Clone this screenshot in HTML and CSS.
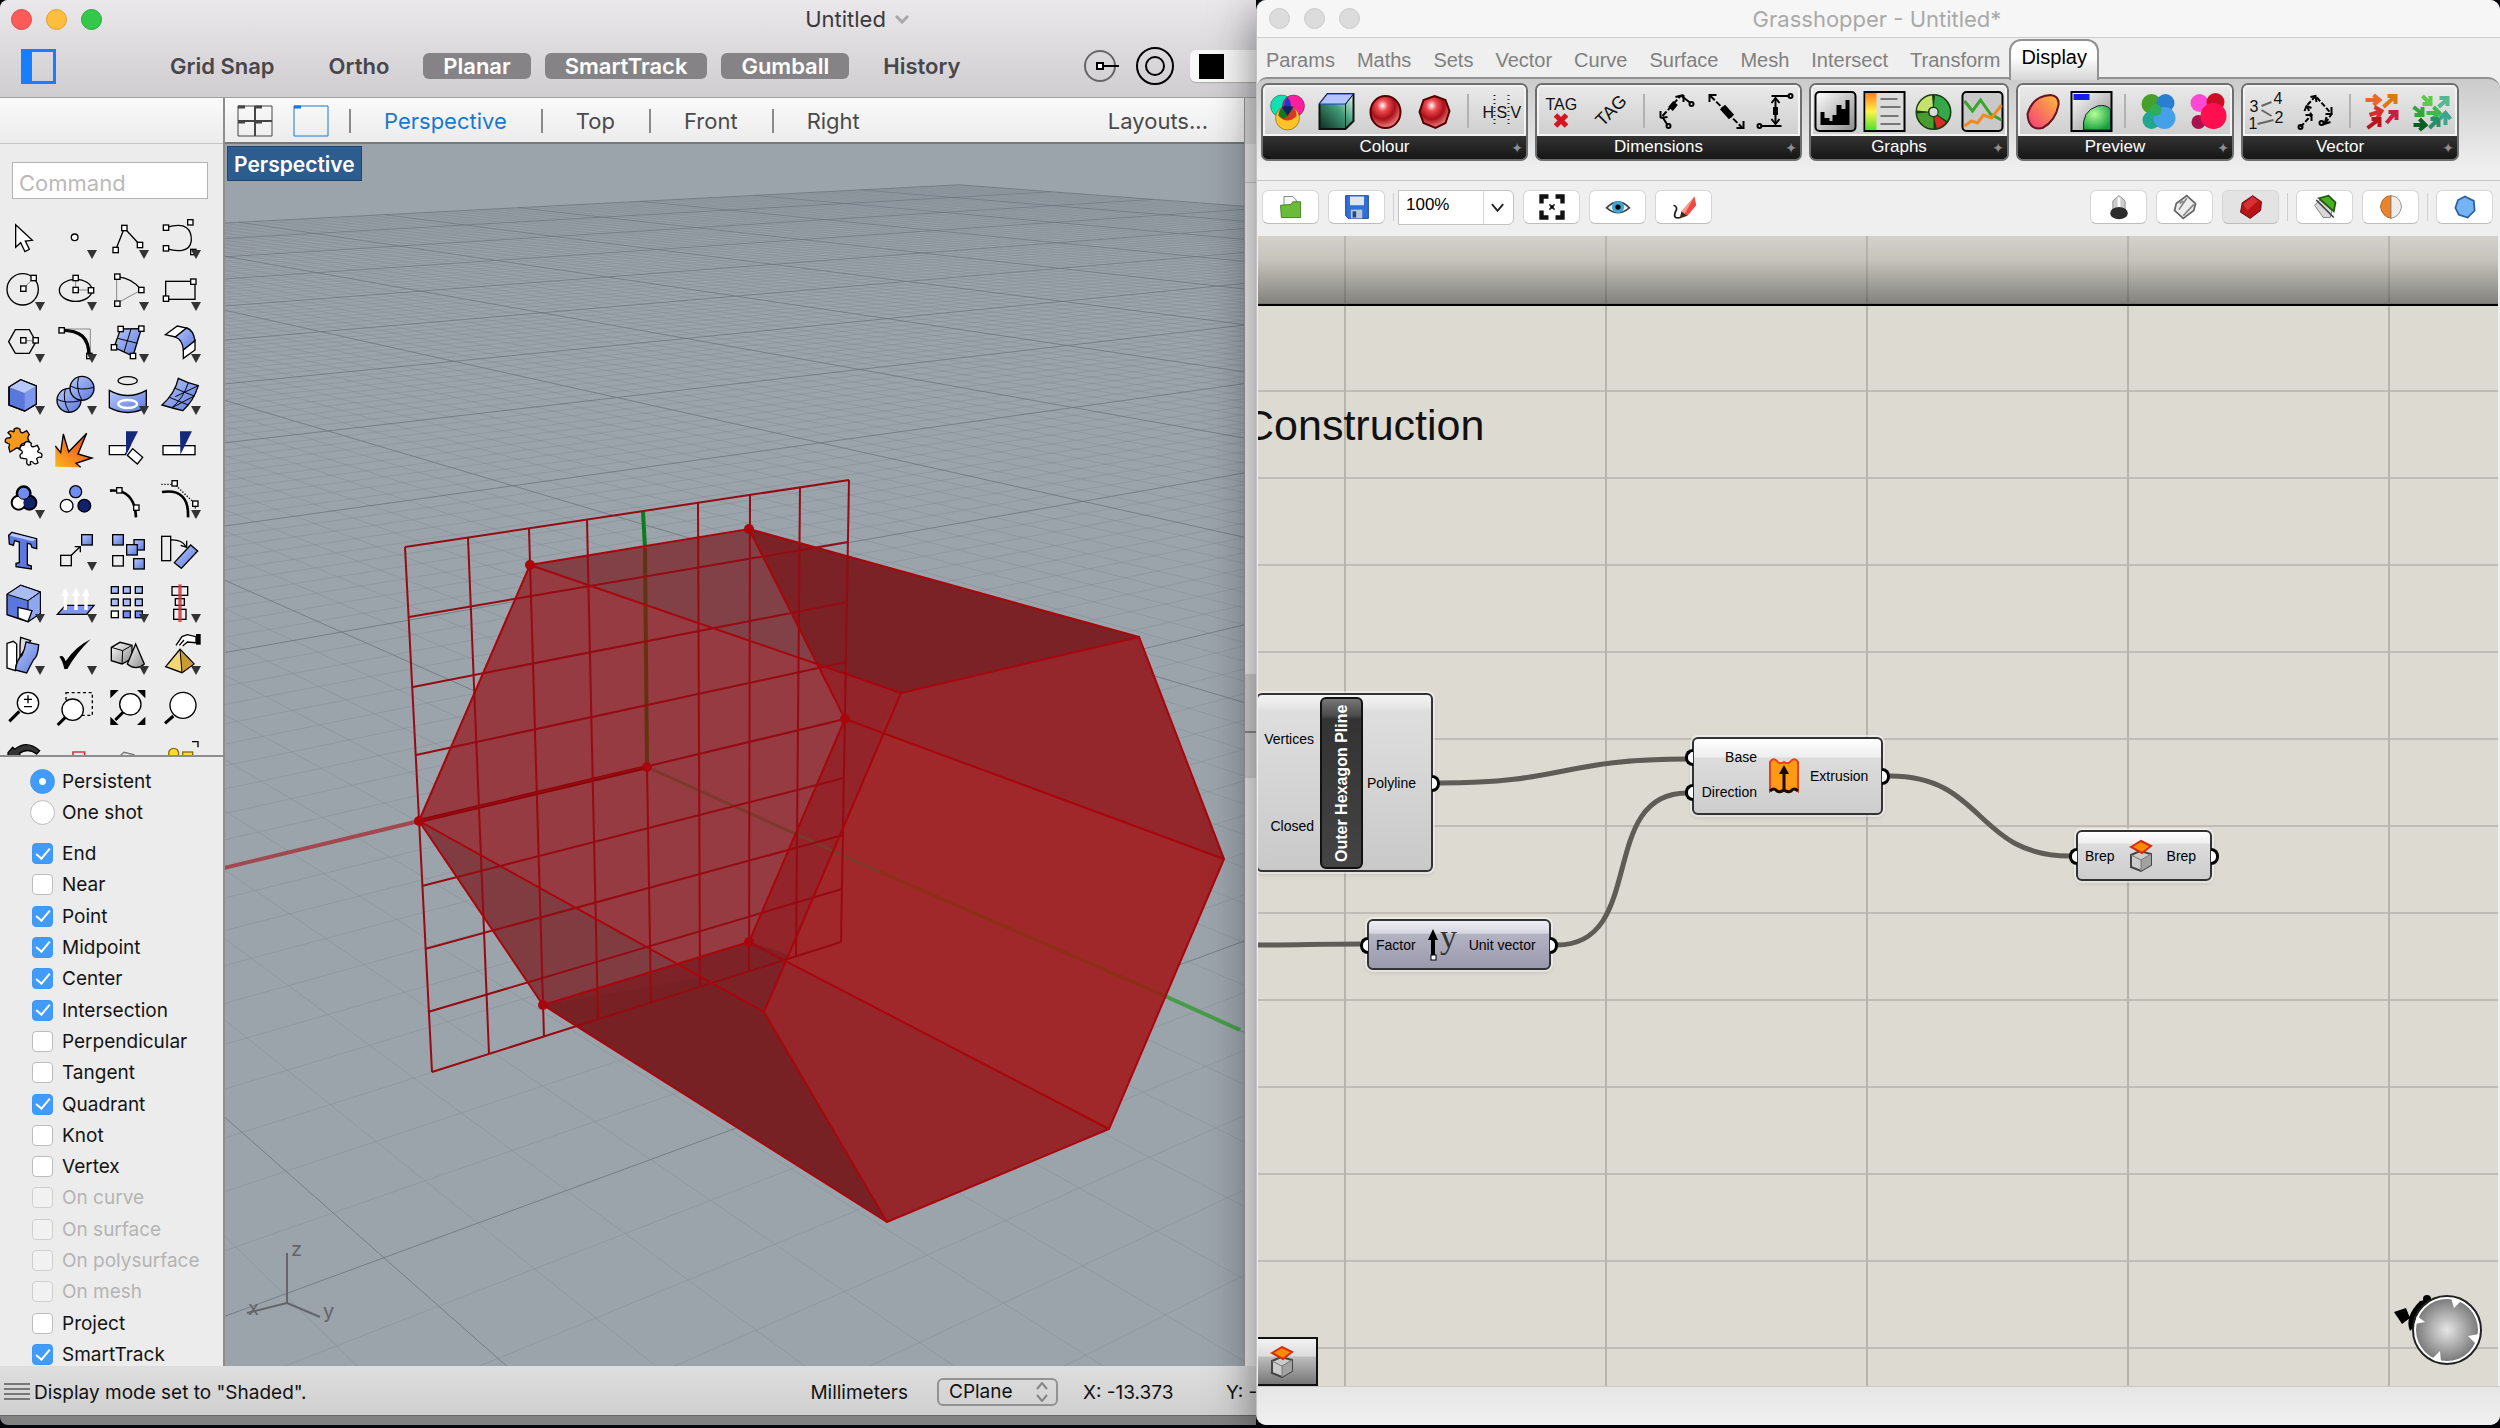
FILE: index.html
```html
<!DOCTYPE html>
<html lang="en">
<head>
    <meta charset="UTF-8">
    <meta name="viewport" content="width=device-width, initial-scale=1.0">
    <title>Untitled</title>
    <link rel="stylesheet" href="styles.css">
</head>
<body>
    <!-- shared gradients and small parts for the icons -->
    <svg class="defs" aria-hidden="true">
        <defs>
            <linearGradient id="blue" x1="0" y1="0" x2="1" y2="1"><stop offset="0" stop-color="#b9c8fa"/><stop offset="1" stop-color="#5a78dc"/></linearGradient>
            <linearGradient id="orange" x1="0" y1="1" x2="1" y2="0"><stop offset="0" stop-color="#ffb41e"/><stop offset="1" stop-color="#e23b22"/></linearGradient>
            <linearGradient id="grey" x1="0" y1="0" x2="1" y2="1"><stop offset="0" stop-color="#fff"/><stop offset="1" stop-color="#8a8a8a"/></linearGradient>
            <linearGradient id="teal" x1="1" y1="0" x2="0" y2="1"><stop offset="0" stop-color="#e8fff4"/><stop offset=".45" stop-color="#3f9a78"/><stop offset="1" stop-color="#0d2a20"/></linearGradient>
            <linearGradient id="heat" x1="0" y1="0" x2="0" y2="1"><stop offset="0" stop-color="#ff7e1e"/><stop offset=".5" stop-color="#fff34a"/><stop offset="1" stop-color="#4fe02e"/></linearGradient>
            <linearGradient id="egg" x1="0" y1="1" x2="1" y2="0"><stop offset="0" stop-color="#f2387a"/><stop offset="1" stop-color="#ffbe3a"/></linearGradient>
            <radialGradient id="ball" cx=".4" cy=".3" r=".7"><stop offset="0" stop-color="#fff"/><stop offset=".25" stop-color="#f04a50"/><stop offset=".6" stop-color="#a80f18"/><stop offset="1" stop-color="#f08080"/></radialGradient>
            <radialGradient id="green" cx=".4" cy=".35" r=".7"><stop offset="0" stop-color="#b6ff9a"/><stop offset="1" stop-color="#12a03c"/></radialGradient>
            <radialGradient id="dial"><stop offset="0" stop-color="#e6e6e6"/><stop offset="1" stop-color="#7c7c7c"/></radialGradient>
            <rect id="pt" x="-8" y="-8" width="16" height="16" fill="#fff" stroke="#000" stroke-width="4"/>
            <g id="brep">
                <path d="M3 15 L12 11 L23 14 V25 L13 31 L3 27 Z" fill="#ccc" stroke="#444" stroke-width="2"/>
                <path d="M13 20 L23 14 V25 L13 31 Z" fill="#a2a2a2"/>
                <path d="M3 15 L13 20 V31 M13 20 L23 14" fill="none" stroke="#777"/>
                <path d="M3 7 L13 1 L23 6 L14 13 Z" fill="#ff8a00" stroke="#d42c10" stroke-width="2"/>
            </g>
        </defs>
    </svg>

    <div class="desktop">
        <!-- Rhino -->
        <div class="window rhino">
            <div class="rhino-header">
                <div class="titlebar">
                    <div class="lights">
                        <button class="light red" aria-label="Close"></button>
                        <button class="light yellow" aria-label="Minimize"></button>
                        <button class="light green" aria-label="Zoom"></button>
                    </div>
                    <div class="doc-title">Untitled
                        <svg width="14" height="9" viewBox="0 0 14 9"><path d="M1 1 L7 7 L13 1" fill="none" stroke="#a9a7aa" stroke-width="3"/></svg>
                    </div>
                </div>
                <div class="toolbar">
                    <button class="side-toggle" aria-label="Toggle sidebar"></button>
                    <div class="modes">
                        <button>Grid Snap</button>
                        <button>Ortho</button>
                        <button class="on">Planar</button>
                        <button class="on">SmartTrack</button>
                        <button class="on">Gumball</button>
                        <button>History</button>
                    </div>
                    <div class="toolbar-right">
                        <button class="icon-btn" aria-label="Filter"><svg width="36" height="36" viewBox="0 0 36 36" fill="none" stroke="#000" stroke-width="2"><circle cx="16" cy="18" r="15" stroke="#666"/><path d="M19 18 H35"/><rect x="13" y="15" width="6" height="6" fill="#fff"/></svg></button>
                        <button class="icon-btn" aria-label="Record"><svg width="40" height="40" viewBox="0 0 40 40" fill="none" stroke="#000" stroke-width="2"><circle cx="20" cy="20" r="18"/><circle cx="20" cy="20" r="9"/></svg></button>
                        <button class="layer-btn" aria-label="Layer colour"><span class="swatch"></span></button>
                    </div>
                </div>
            </div>

            <div class="rhino-main">
                <div class="sidebar">
                    <div class="strip"></div>
                    <input class="command" type="text" placeholder="Command" aria-label="Command">
                    <div class="tools">
                        <button class="tool" aria-label="Select"><svg viewBox="0 183 156 156"><path d="M47 224 V292 L62 278 L75 305 L88 298 L76 273 L97 271 Z"/></svg></button>
                        <button class="tool more" aria-label="Point"><svg viewBox="156 183 156 156"><circle cx="224" cy="262" r="10"/></svg></button>
                        <button class="tool more" aria-label="Polyline"><svg viewBox="312 183 156 156"><path d="M347 300 L373 234 L420 285" fill="none"/><use href="#pt" x="347" y="300"/><use href="#pt" x="373" y="234"/><use href="#pt" x="420" y="285"/></svg></button>
                        <button class="tool more" aria-label="Curve"><svg viewBox="468 183 156 156"><path d="M498 233 C560 213 575 240 574 272 C570 308 530 306 498 295" fill="none"/><use href="#pt" x="498" y="233"/><use href="#pt" x="498" y="295"/><use href="#pt" x="571" y="217"/><use href="#pt" x="580" y="306"/></svg></button>

                        <button class="tool more" aria-label="Circle"><svg viewBox="0 339 156 156"><circle cx="68" cy="418" r="47" fill="none"/><path class="thin" d="M70 416 L101 384"/><use href="#pt" x="70" y="416"/><use href="#pt" x="101" y="384"/></svg></button>
                        <button class="tool more" aria-label="Ellipse"><svg viewBox="156 339 156 156"><ellipse cx="227" cy="421" rx="49" ry="33" fill="none"/><path class="thin" d="M227 384 V420 H273"/><use href="#pt" x="227" y="384"/><use href="#pt" x="227" y="420"/><use href="#pt" x="273" y="421"/></svg></button>
                        <button class="tool more" aria-label="Arc"><svg viewBox="312 339 156 156"><path class="thin" d="M350 380 V460 L424 420"/><path d="M352 380 Q398 385 424 420" fill="none"/><use href="#pt" x="352" y="380"/><use href="#pt" x="424" y="420"/><use href="#pt" x="352" y="461"/></svg></button>
                        <button class="tool more" aria-label="Rectangle"><svg viewBox="468 339 156 156"><rect x="497" y="394" width="88" height="54" fill="none"/><use href="#pt" x="580" y="395"/><use href="#pt" x="498" y="446"/></svg></button>

                        <button class="tool more" aria-label="Polygon"><svg viewBox="0 495 156 156"><path d="M26 575 L46 539 H88 L108 575 L88 610 H46 Z" fill="none"/><path class="thin" d="M70 572 H107"/><use href="#pt" x="70" y="571"/><use href="#pt" x="107" y="571"/></svg></button>
                        <button class="tool more" aria-label="Fillet"><svg viewBox="156 495 156 156"><path class="thin" d="M185 537 H271 V618"/><path d="M185 541 C240 541 267 560 267 618" fill="none" stroke-width="10"/><use href="#pt" x="185" y="541"/><use href="#pt" x="268" y="618"/></svg></button>
                        <button class="tool more" aria-label="Surface"><svg viewBox="312 495 156 156"><path d="M362 537 L424 536 L399 618 L342 592 Z" fill="url(#blue)"/><path d="M393 537 L372 606 M353 565 L412 580" fill="none" stroke-width="3"/><use href="#pt" x="362" y="537"/><use href="#pt" x="424" y="536"/><use href="#pt" x="399" y="618"/><use href="#pt" x="342" y="592"/></svg></button>
                        <button class="tool more" aria-label="Fillet surface"><svg viewBox="468 495 156 156"><path d="M496 554 L532 528 L560 534 L526 561 Z"/><path d="M526 561 L560 534 Q580 540 585 572 L550 600 Q548 570 526 561 Z" fill="url(#blue)"/><path d="M585 572 V600 L550 625 V600 Z"/></svg></button>

                        <button class="tool more" aria-label="Box"><svg viewBox="0 651 156 156"><path d="M27 711 L62 689 L109 708 V762 L74 783 L27 765 Z" fill="#5a78dc"/><path d="M27 711 L74 729 L109 708 L62 689 Z" fill="#b9c8fa" stroke="none"/><path d="M74 729 L109 708 V762 L74 783 Z" fill="#7f97ea" stroke="none"/><path d="M27 711 L62 689 L109 708 V762 L74 783 L27 765 Z" fill="none"/></svg></button>
                        <button class="tool more" aria-label="Boolean"><svg viewBox="156 651 156 156"><circle cx="207" cy="751" r="36" fill="url(#blue)"/><path d="M171 748 Q200 762 240 752 M196 717 Q186 750 208 787" fill="none" stroke-width="3"/><circle cx="246" cy="715" r="36" fill="url(#blue)"/><path d="M211 708 Q240 724 282 712 M236 681 Q226 715 246 751" fill="none" stroke-width="3"/></svg></button>
                        <button class="tool more" aria-label="Project"><svg viewBox="312 651 156 156"><ellipse cx="383" cy="692" rx="29" ry="12" fill="none"/><path d="M328 721 Q383 752 439 721 V773 Q383 802 328 773 Z" fill="url(#blue)"/><ellipse cx="383" cy="762" rx="28" ry="12" fill="none" stroke="#fff" stroke-width="7"/></svg></button>
                        <button class="tool more" aria-label="Mesh"><svg viewBox="468 651 156 156"><path d="M535 685 Q565 700 595 707 Q580 755 548 782 Q520 775 486 765 Q525 730 535 685 Z" fill="url(#blue)"/><path d="M565 698 Q550 745 516 773 M526 715 Q555 728 583 738 M508 742 Q535 753 565 765 M595 707 L526 740 M583 738 L516 773" fill="none" stroke-width="3"/></svg></button>

                        <button class="tool" aria-label="Join"><svg viewBox="0 807 156 156"><path d="M16 876 Q14 862 28 864 Q36 862 30 854 L24 848 Q30 840 38 844 Q44 848 42 838 Q50 830 60 838 Q60 850 70 848 L80 842 L88 854 Q80 864 86 870 Q90 880 80 884 Q68 876 62 886 L60 898 Q50 890 44 898 L30 906 L26 892 Q32 882 24 880 Z" fill="#f59a1e"/><path d="M58 898 L64 886 Q76 888 74 878 Q84 870 94 880 Q90 892 102 890 L112 886 L118 898 Q108 906 118 908 Q130 910 124 922 Q114 920 110 926 L114 938 Q104 946 98 936 Q88 930 92 944 Q80 948 80 936 Q84 924 72 926 L62 924 Q56 914 66 910 Q70 902 58 898 Z"/></svg></button>
                        <button class="tool" aria-label="Explode"><svg viewBox="156 807 156 156"><path d="M166 950 V890 L182 905 L190 850 L206 902 L260 850 L236 912 L276 924 L228 940 L242 952 Z" fill="url(#orange)" stroke="none"/><path d="M166 888 L182 908 L190 852 L206 906 L260 850 L234 912 L276 924 L228 940 L242 952" fill="none"/></svg></button>
                        <button class="tool" aria-label="Trim"><svg viewBox="312 807 156 156"><path d="M328 887 H390 L376 914 H328 Z"/><path d="M398 896 L428 922 L412 942 L382 916 Z"/><path d="M378 844 H414 L378 914 Z" fill="#15297c" stroke="none"/></svg></button>
                        <button class="tool" aria-label="Split"><svg viewBox="468 807 156 156"><rect x="489" y="887" width="96" height="27"/><path d="M540 844 H576 L541 914 Z" fill="#15297c" stroke="none"/></svg></button>

                        <button class="tool more" aria-label="Group"><svg viewBox="0 3 156 156"><g stroke-width="14"><circle cx="71" cy="70" r="17"/><circle cx="56" cy="98" r="17"/><circle cx="88" cy="98" r="17"/></g><g stroke="none"><circle cx="56" cy="98" r="18"/><circle cx="88" cy="98" r="18" fill="#10226b"/></g><circle cx="71" cy="70" r="18" fill="#6f8cf0" stroke-width="3"/></svg></button>
                        <button class="tool" aria-label="Ungroup"><svg viewBox="156 3 156 156"><circle cx="227" cy="65" r="18" fill="#6f8cf0"/><circle cx="200" cy="107" r="19"/><circle cx="253" cy="107" r="19" fill="#10226b"/></svg></button>
                        <button class="tool" aria-label="Edit points"><svg viewBox="312 3 156 156"><path d="M330 62 Q404 56 408 142" fill="none" stroke-width="8"/><use href="#pt" x="358" y="61"/><use href="#pt" x="409" y="113"/></svg></button>
                        <button class="tool more" aria-label="Control points"><svg viewBox="468 3 156 156"><path d="M486 66 Q568 54 564 142" fill="none" stroke-width="8"/><path d="M484 43 H524 L586 102 V142" fill="none" stroke-dasharray="4 5"/><use href="#pt" x="524" y="40"/><use href="#pt" x="586" y="101"/></svg></button>

                        <button class="tool" aria-label="Text"><svg viewBox="0 159 156 156"><path d="M36 187 L110 206 V236 L96 232 L92 222 L82 220 L82 284 L94 288 V297 L48 290 V280 L58 278 V216 L44 212 L40 226 L28 222 L26 196 Z" fill="#5b79e0"/><path d="M36 190 L108 208 L98 214 L30 197 Z" fill="#b9c8fa" stroke="none"/></svg></button>
                        <button class="tool more" aria-label="Move"><svg viewBox="156 159 156 156"><rect x="182" y="256" width="32" height="31" fill="#eee"/><rect x="245" y="194" width="32" height="31" fill="url(#blue)"/><path d="M214 256 L240 230 M224 230 H241 V247" fill="none"/></svg></button>
                        <button class="tool" aria-label="Copy"><svg viewBox="312 159 156 156"><rect x="338" y="194" width="32" height="31" fill="url(#blue)"/><rect x="402" y="209" width="31" height="31" fill="url(#blue)"/><rect x="380" y="224" width="32" height="31" fill="url(#blue)"/><rect x="338" y="257" width="32" height="31" fill="#eee"/><rect x="401" y="266" width="32" height="31" fill="url(#blue)"/></svg></button>
                        <button class="tool" aria-label="Rotate"><svg viewBox="468 159 156 156"><rect x="485" y="199" width="27" height="73" fill="#eee"/><path d="M523 278 L572 225 L593 243 L544 295 Z" fill="url(#blue)"/><path d="M512 210 Q545 208 558 230 M560 212 V232 L542 226" fill="none"/></svg></button>

                        <button class="tool more" aria-label="Solid"><svg viewBox="0 315 156 156"><path d="M21 373 L62 346 L121 366 V430 L84 455 L21 434 Z" fill="#5a78dc"/><path d="M21 373 L62 346 L121 366 L84 392 Z" fill="#a9bcf6" stroke-width="3"/><path d="M84 392 L121 366 V430 L84 455 Z" fill="#8fa6f0" stroke-width="3"/><path d="M54 412 L96 422 L84 455 L54 444 Z"/></svg></button>
                        <button class="tool more" aria-label="Project up"><svg viewBox="156 315 156 156"><path d="M172 433 L196 406 H282 L260 433 Z" fill="#7f97ea"/><path d="M196 420 V360 M228 420 V360 M258 420 V360" stroke="#fff" stroke-width="10"/><path d="M184 378 L196 354 L208 378 Z M216 378 L228 354 L240 378 Z M246 378 L258 354 L270 378 Z" stroke="none"/></svg></button>
                        <button class="tool more" aria-label="Array"><svg viewBox="312 315 156 156"><g fill="#a9bcf6"><rect x="334" y="350" width="21" height="20"/><rect x="370" y="350" width="21" height="20"/><rect x="406" y="350" width="21" height="20"/><rect x="334" y="387" width="21" height="20"/><rect x="370" y="387" width="21" height="20"/><rect x="406" y="387" width="21" height="20"/><rect x="334" y="423" width="21" height="20" fill="#fff"/><rect x="370" y="423" width="21" height="20" fill="#6f8cf0"/><rect x="406" y="423" width="21" height="20" fill="#6f8cf0"/></g></svg></button>
                        <button class="tool more" aria-label="Align"><svg viewBox="468 315 156 156"><rect x="516" y="350" width="47" height="26" fill="#eee"/><rect x="526" y="386" width="27" height="20" fill="#eee"/><rect x="521" y="418" width="37" height="30" fill="#eee"/><path d="M540 343 V456" stroke="#d4383f" stroke-width="10" opacity=".85"/></svg></button>

                        <button class="tool more" aria-label="Bend"><svg viewBox="0 471 156 156"><path d="M21 520 L40 514 L50 522 V580 L46 602 L21 594 Z"/><path d="M62 502 L92 512 L60 560 L60 526 Z" fill="#ddd"/><path d="M78 516 L116 524 Q114 560 100 570 Q92 585 80 609 L46 600 Q50 570 66 556 Q74 540 78 516 Z" fill="url(#blue)"/></svg></button>
                        <button class="tool more" aria-label="Check"><svg viewBox="156 471 156 156"><path d="M178 560 Q190 553 197 574 Q226 530 272 508 Q230 548 202 597 H193 Q188 572 178 560 Z" fill="#000" stroke="none"/></svg></button>
                        <button class="tool more" aria-label="Render"><svg viewBox="312 471 156 156"><path d="M334 532 L360 517 L396 526 V566 L366 582 L334 572 Z" fill="url(#grey)"/><path d="M334 532 L368 542 L396 526 M368 542 L366 582" fill="none" stroke-width="3"/><path d="M407 522 L433 582 Q408 604 382 582 Z" fill="url(#grey)"/></svg></button>
                        <button class="tool more" aria-label="Drag mode"><svg viewBox="468 471 156 156"><path d="M540 538 L582 582 L546 608 L497 590 Z" fill="#f4d674"/><path d="M540 538 L582 582 L546 608 Z" fill="#c79a35" stroke-width="3"/><path d="M528 526 L546 500 L562 494 L588 500 V518 L562 516 L548 528 M538 526 L552 510" /><rect x="588" y="492" width="14" height="32" fill="#000" stroke="none"/></svg></button>

                        <button class="tool" aria-label="Zoom dynamic"><svg viewBox="0 627 156 156"><path d="M28 754 L58 724" stroke-width="9"/><circle cx="84" cy="699" r="32"/><path d="M72 688 H96 M84 676 V700 M72 710 H96"/></svg></button>
                        <button class="tool" aria-label="Zoom window"><svg viewBox="156 627 156 156"><rect x="198" y="668" width="79" height="68" fill="none" stroke-dasharray="9 8"/><path d="M173 765 L196 742" stroke-width="9"/><circle cx="218" cy="719" r="32"/></svg></button>
                        <button class="tool" aria-label="Zoom extents"><svg viewBox="312 627 156 156"><path d="M331 660 H356 L331 685 Z M411 660 H436 V685 Z M331 740 V765 H356 Z M436 740 V765 H411 Z" fill="#000" stroke="none"/><path d="M346 750 L370 726" stroke-width="9"/><circle cx="391" cy="703" r="32"/></svg></button>
                        <button class="tool" aria-label="Zoom selected"><svg viewBox="468 627 156 156"><path d="M495 760 L520 738" stroke-width="9"/><circle cx="549" cy="706" r="39"/></svg></button>

                        <button class="tool" aria-label="Undo view"><svg viewBox="0 783 156 156"><path d="M24 848 L38 832 L44 838 Q80 808 119 842 L110 852 Q84 832 58 850 L62 860 L24 862 Z" fill="#333"/></svg></button>
                        <button class="tool" aria-label="Pan"><svg viewBox="156 783 156 156"><path d="M219 880 V846 H254 V880" fill="none" stroke="#d4383f" stroke-width="5"/></svg></button>
                        <button class="tool" aria-label="Plane"><svg viewBox="312 783 156 156"><path d="M362 856 L372 847 L404 855" fill="none" stroke="#777"/></svg></button>
                        <button class="tool" aria-label="Named view"><svg viewBox="468 783 156 156"><circle cx="521" cy="850" r="15" fill="#ffd83c" stroke="#8a6a10"/><rect x="548" y="846" width="30" height="30" fill="#ffd83c" stroke="#8a6a10"/><path d="M576 815 H594 V832" fill="none"/></svg></button>
                    </div>
                    <div class="osnap">
                        <label><input type="radio" name="snap" checked>Persistent</label>
                        <label><input type="radio" name="snap">One shot</label>
                        <div class="snaps">
                            <label><input type="checkbox" checked>End</label>
                            <label><input type="checkbox">Near</label>
                            <label><input type="checkbox" checked>Point</label>
                            <label><input type="checkbox" checked>Midpoint</label>
                            <label><input type="checkbox" checked>Center</label>
                            <label><input type="checkbox" checked>Intersection</label>
                            <label><input type="checkbox">Perpendicular</label>
                            <label><input type="checkbox">Tangent</label>
                            <label><input type="checkbox" checked>Quadrant</label>
                            <label><input type="checkbox">Knot</label>
                            <label><input type="checkbox">Vertex</label>
                            <label class="off"><input type="checkbox" disabled>On curve</label>
                            <label class="off"><input type="checkbox" disabled>On surface</label>
                            <label class="off"><input type="checkbox" disabled>On polysurface</label>
                            <label class="off"><input type="checkbox" disabled>On mesh</label>
                            <label><input type="checkbox">Project</label>
                            <label><input type="checkbox" checked>SmartTrack</label>
                        </div>
                    </div>
                </div>

                <div class="view-area">
                    <div class="view-tabs">
                        <button class="layout-btn" aria-label="Four views"><svg width="36" height="32" viewBox="0 0 36 32" fill="none" stroke="#444" stroke-width="1"><path d="M1 1 H35 V31 H1 Z"/><path d="M18 1 V31 M1 16 H35" stroke-width="2"/><path d="M1 2 H8 M18 2 H25 M1 17 H8 M18 17 H25" stroke-width="3"/></svg></button>
                        <button class="layout-btn" aria-label="Single view"><svg width="36" height="32" viewBox="0 0 36 32" fill="none" stroke="#1779dd" stroke-width="1"><path d="M1 1 H35 V31 H1 Z"/><path d="M1 2 H8" stroke-width="3"/></svg></button>
                        <div class="tab-list">
                            <button class="view-tab current">Perspective</button>
                            <button class="view-tab">Top</button>
                            <button class="view-tab">Front</button>
                            <button class="view-tab">Right</button>
                        </div>
                        <button class="layouts">Layouts...</button>
                    </div>
                    <div class="viewport">
                        <svg class="scene" viewBox="225 144 1019 1222" preserveAspectRatio="xMinYMin slice">
                            <g id="ground"></g>
                            <path d="M224 868 L419 821" stroke="#a3484f" stroke-width="4"/>
                            <path d="M1165 996 L1240 1030" stroke="#479c49" stroke-width="4"/>
                            <clipPath id="back"><path d="M530 565 L749 529 L845 719 L749 942 L543 1005 L419 821 Z"/></clipPath>
                            <!-- faces -->
                            <path d="M530 565 L749 529 L1139 637 L901 693 Z" fill="#7b2226"/>
                            <path d="M419 821 L530 565 L901 693 L764 1012 Z" fill="#92242a"/>
                            <path d="M419 821 L764 1012 L887 1222 L543 1005 Z" fill="#782124"/>
                            <path d="M543 1005 L749 942 L796 957 L764 1012 L700 978 Z" fill="#7d2226"/>
                            <path d="M901 693 L1139 637 L1224 859 L1109 1129 L887 1222 L764 1012 Z" fill="#a0272a"/>
                            <path d="M901 693 L1139 637 L1224 859 L878 731 Z" fill="#93272b"/>
                            <path d="M785 962 L1109 1129 L887 1222 L764 1012 Z" fill="#95272b"/>
                            <g clip-path="url(#back)">
                                <path d="M530 565 L749 529 L1139 637 L901 693 Z" fill="#824047"/>
                                <path d="M419 821 L530 565 L901 693 L764 1012 Z" fill="#963b41"/>
                                <path d="M419 821 L764 1012 L887 1222 L543 1005 Z" fill="#803c41"/>
                            </g>
                            <!-- axes -->
                            <path d="M643 512 L645 548" stroke="#0b7d1d" stroke-width="4"/>
                            <path d="M645 548 L647 767" stroke="#643210" stroke-width="4"/>
                            <path d="M647 767 L880 872" stroke="#7c3a2c" stroke-width="3"/>
                            <path d="M880 872 L1165 996" stroke="#8c2f14" stroke-width="3"/>
                            <path d="M419 821 L647 767" stroke="#8b0004" stroke-width="4"/>
                            <!-- construction plane on the back face -->
                            <g class="wall">
                                <path d="M405 547 L432 1072 M468 538 L489 1054 M529 529 L544 1037 M587 520 L598 1020 M647 767 L651 1003 M698 503 L700 987 M750 495 L749 971 M800 487 L796 957 M849 480 L841 942"/>
                                <path d="M405 547 L849 480 M409 617 L848 542 M413 687 L847 602 M416 755 L846 662 M419 821 L845 719 M422 886 L844 778 M425 949 L843 835 M428 1012 L842 889 M432 1072 L841 942"/>
                            </g>
                            <g class="edges">
                                <path d="M419 821 L530 565 L749 529 L845 719 L749 942 L543 1005 Z"/>
                                <path d="M901 693 L1139 637 L1224 859 L1109 1129 L887 1222 L764 1012 Z"/>
                                <path d="M530 565 L901 693 M749 529 L1139 637 M845 719 L1224 859 M749 942 L1109 1129 M543 1005 L887 1222 M419 821 L764 1012"/>
                            </g>
                            <g fill="#a8060c">
                                <circle cx="530" cy="565" r="5"/><circle cx="749" cy="529" r="5"/><circle cx="845" cy="719" r="5"/><circle cx="749" cy="942" r="5"/><circle cx="543" cy="1005" r="5"/><circle cx="419" cy="821" r="5"/><circle cx="647" cy="767" r="5"/>
                            </g>
                            <!-- world axes icon -->
                            <g class="gizmo">
                                <path d="M287 1253 V1303 L247 1313 M287 1303 L320 1317"/>
                                <text x="291" y="1256">z</text>
                                <text x="248" y="1315">x</text>
                                <text x="323" y="1318">y</text>
                            </g>
                        </svg>
                        <button class="view-label">Perspective</button>
                    </div>
                </div>

                <div class="edge">
                    <div class="edge-top"></div>
                    <div class="edge-head"></div>
                    <div class="edge-body"></div>
                    <div class="edge-grip"></div>
                    <div class="edge-grip"></div>
                    <div class="edge-rest"></div>
                </div>
            </div>

            <div class="status">
                <svg width="26" height="20" viewBox="0 0 26 20"><path d="M0 2 H26 M0 7 H26 M0 12 H26 M0 17 H26" stroke="#777" stroke-width="2"/></svg>
                <span class="message">Display mode set to "Shaded".</span>
                <span class="units">Millimeters</span>
                <span class="cplane">
                    <select aria-label="Coordinates"><option>CPlane</option></select>
                    <svg width="12" height="20" viewBox="0 0 12 20"><path d="M1 7 L6 1 L11 7 M1 13 L6 19 L11 13" fill="none" stroke="#858585" stroke-width="2"/></svg>
                </span>
                <span class="coord-x">X: -13.373</span>
                <span class="coord-y">Y: -</span>
            </div>
        </div>

        <!-- Grasshopper -->
        <div class="window gh">
            <div class="gh-title">
                <div class="lights">
                    <button class="light" aria-label="Close"></button>
                    <button class="light" aria-label="Minimize"></button>
                    <button class="light" aria-label="Zoom"></button>
                </div>
                <h1>Grasshopper - Untitled*</h1>
            </div>
            <div class="gh-tabs">
                <button>Params</button>
                <button>Maths</button>
                <button>Sets</button>
                <button>Vector</button>
                <button>Curve</button>
                <button>Surface</button>
                <button>Mesh</button>
                <button>Intersect</button>
                <button>Transform</button>
                <button class="active">Display</button>
            </div>
            <div class="ribbon">
                <div class="group">
                    <div class="group-icons">
                        <button aria-label="Colour CMYK"><svg viewBox="0 0 48 48"><g stroke="#0005"><circle cx="18" cy="19" r="11" fill="#12e0b0"/><circle cx="30" cy="19" r="11" fill="#ff1e9c"/><circle cx="24" cy="31" r="12" fill="#ffc32a"/></g><path d="M24 10 Q31 18 24 28 Q17 18 24 10 Z" fill="#2a2fd0"/><path d="M15 29 Q14 20 24 20 Q34 20 33 29 Q24 38 15 29 Z" fill="#d43a1e"/><path d="M18 20 Q24 18 30 20 L24 29 Z" fill="#16205a"/><path d="M15 28 L18 21 L24 29 L20 32 Z" fill="#0a7a1e"/></svg></button>
                        <button aria-label="Colour cube"><svg viewBox="0 0 48 48"><path d="M7 17 L15 7 H41 V34 L33 42 H7 Z" fill="url(#teal)" stroke="#111" stroke-width="2"/><path d="M7 17 L15 7 H41 L33 17 Z" fill="#b4c4ff" stroke="#2340c0"/><path d="M33 17 V42 M41 7 L33 17" stroke="#111"/></svg></button>
                        <button aria-label="Colour sphere"><svg viewBox="0 0 48 48"><ellipse cx="24" cy="25" rx="15" ry="16" fill="url(#ball)" stroke="#500" stroke-width="2"/></svg></button>
                        <button aria-label="Colour facets"><svg viewBox="0 0 48 48"><path d="M24 9 L35 13 L39 24 L35 36 L25 41 L13 36 L9 25 L13 13 Z" fill="url(#ball)" stroke="#500" stroke-width="2"/></svg></button>
                        <span class="sep"></span>
                        <button aria-label="Split HSV"><svg viewBox="0 0 48 48"><path d="M17 8 V40 M31 8 V40" stroke="#222" stroke-dasharray="1 3" stroke-width="2"/><text x="5" y="31" font-size="16">H</text><text x="19" y="31" font-size="16">S</text><text x="33" y="31" font-size="16">V</text></svg></button>
                    </div>
                    <div class="group-name">Colour</div>
                </div>
                <div class="group">
                    <div class="group-icons">
                        <button aria-label="Remove tag"><svg viewBox="0 0 48 48"><text x="8" y="23" font-size="16">TAG</text><path d="M18 28 L29 39 M29 28 L18 39" stroke="#d41420" stroke-width="5"/></svg></button>
                        <button aria-label="Tag 3D"><svg viewBox="0 0 48 48"><text x="7" y="30" font-size="18" transform="rotate(-45 24 24)">TAG</text></svg></button>
                        <span class="sep"></span>
                        <button aria-label="Angular dimension"><svg viewBox="0 0 48 48" fill="none" stroke="#000" stroke-width="2"><path d="M9 29 L27 9" stroke-dasharray="6 2"/><path d="M30 8 L22 10 M30 8 L30 15 M7 31 V24 M7 31 L14 30" /><path d="M17 22 L22 16" stroke-width="6"/><path d="M28 9 L37 16 M9 30 L14 38"/><circle cx="38" cy="17" r="2"/><circle cx="15" cy="39" r="2"/></svg></button>
                        <button aria-label="Aligned dimension"><svg viewBox="0 0 48 48" fill="none" stroke="#000" stroke-width="2"><path d="M8 9 L40 41" stroke-dasharray="6 2"/><path d="M7 15 V8 H14 M41 34 V41 H34"/><path d="M20 20 L29 30" stroke-width="7"/></svg></button>
                        <button aria-label="Linear dimension"><svg viewBox="0 0 48 48" fill="none" stroke="#000" stroke-width="2"><path d="M20 9 H38 M9 39 H30 M24 11 V37"/><path d="M20 16 L24 11 L28 16 M20 32 L24 37 L28 32"/><path d="M24 20 V28" stroke-width="5"/><circle cx="39" cy="9" r="2"/><circle cx="8" cy="39" r="2"/></svg></button>
                    </div>
                    <div class="group-name">Dimensions</div>
                </div>
                <div class="group">
                    <div class="group-icons">
                        <button aria-label="Bar graph"><svg viewBox="0 0 48 48"><rect x="4" y="5" width="40" height="39" rx="4" fill="url(#grey)" stroke="#000" stroke-width="2"/><path d="M9 38 V25 H13 V31 H18 V34 H21 V28 H25 V18 H30 V22 H34 V13 H38 V38 Z" fill="#000"/></svg></button>
                        <button aria-label="Legend"><svg viewBox="0 0 48 48"><rect x="4" y="5" width="40" height="39" fill="#dcdcdc" stroke="#000" stroke-width="2"/><rect x="5" y="6" width="11" height="37" fill="url(#heat)"/><path d="M20 12 H37 M20 20 H40 M20 29 H38 M20 37 H40" stroke="#777" stroke-width="2"/></svg></button>
                        <button aria-label="Pie chart"><svg viewBox="0 0 48 48" fill="none" stroke-width="11"><circle cx="24" cy="25" r="11" stroke="#173d12" stroke-width="14"/><path d="M13 24 A11 11 0 0 1 23 14" stroke="#c5e36a"/><path d="M25 14 A11 11 0 0 1 33 31" stroke="#37a84a"/><path d="M32 32 A11 11 0 0 1 26 36" stroke="#dd2a22"/><path d="M24 36 A11 11 0 0 1 13 26" stroke="#4a9c2e"/></svg></button>
                        <button aria-label="Quick graph"><svg viewBox="0 0 48 48" fill="none" stroke-width="3"><rect x="4" y="5" width="40" height="39" rx="4" fill="#c9c9c9" stroke="#000" stroke-width="2"/><path d="M6 14 L14 24 L22 13 L32 27 L43 33" stroke="#3aa52e"/><path d="M6 39 L13 34 L19 36 L25 28 L33 31 L43 18" stroke="#f08a1e"/></svg></button>
                    </div>
                    <div class="group-name">Graphs</div>
                </div>
                <div class="group">
                    <div class="group-icons">
                        <button aria-label="Custom preview"><svg viewBox="0 0 48 48"><path d="M9 27 Q14 9 32 8 Q41 9 40 18 Q37 34 24 41 Q10 44 9 27 Z" fill="url(#egg)" stroke="#6a1420" stroke-width="2"/></svg></button>
                        <button aria-label="Cloud display"><svg viewBox="0 0 48 48"><rect x="4" y="5" width="40" height="39" fill="url(#grey)" stroke="#000" stroke-width="2"/><rect x="6" y="7" width="16" height="6" fill="#1420e6"/><path d="M16 43 Q14 24 30 19 Q38 17 43 22 V43 Z" fill="url(#green)" stroke="#123"/></svg></button>
                        <span class="sep"></span>
                        <button aria-label="Dot display"><svg viewBox="0 0 48 48"><circle cx="17" cy="17" r="10" fill="#47a02a"/><circle cx="31" cy="16" r="9" fill="#2a7ed2"/><circle cx="17" cy="33" r="9" fill="#1fa88c"/><circle cx="30" cy="31" r="11" fill="#46a0e8"/><circle cx="21" cy="23" r="6" fill="#2fae58"/></svg></button>
                        <button aria-label="Symbol display"><svg viewBox="0 0 48 48"><circle cx="16" cy="16" r="9" fill="#ff48d4"/><circle cx="32" cy="15" r="9" fill="#cc0e24"/><circle cx="15" cy="35" r="7" fill="#a8124e"/><circle cx="30" cy="29" r="13" fill="#ff0f50"/></svg></button>
                    </div>
                    <div class="group-name">Preview</div>
                </div>
                <div class="group">
                    <div class="group-icons">
                        <button aria-label="Point order"><svg viewBox="0 0 48 48"><path d="M18 19 L28 15 M18 23 L28 29 M14 37 L30 33" stroke="#666" stroke-width="2"/><text x="6" y="25" font-size="16" fill="#555">3</text><text x="30" y="17" font-size="16" fill="#888">4</text><text x="5" y="42" font-size="16">1</text><text x="31" y="36" font-size="16" fill="#222">2</text></svg></button>
                        <button aria-label="Point list"><svg viewBox="0 0 48 48" fill="none" stroke="#000" stroke-width="2"><path d="M8 40 L19 28 L14 19 L23 9 L39 27 L33 36" stroke-dasharray="5 2"/><path d="M13 28 H19 V34 M12 24 L14 19 L19 21 M18 10 L23 9 L24 15 M33 27 H39 V20 M34 30 L32 37 L38 35"/><circle cx="8" cy="40" r="2"/><circle cx="29" cy="36" r="2"/></svg></button>
                        <span class="sep"></span>
                        <button aria-label="Vector display"><svg viewBox="0 0 48 48" fill="none" stroke-width="4"><path d="M6 13 H19 M14 8 L20 13 L14 18" stroke="#e8682c"/><path d="M24 20 L36 9 M28 9 H36 V17" stroke="#d87a14"/><path d="M10 28 L22 24 M15 20 L22 24 L18 31" stroke="#d43030"/><path d="M27 36 L37 24 M29 25 H37 V33" stroke="#c42040"/><path d="M8 41 L20 32 M12 32 H20 V40" stroke="#b8141e"/></svg></button>
                        <button aria-label="Vector field"><svg viewBox="0 0 48 48" fill="none" stroke-width="4"><path d="M14 9 L22 17 M14 17 H22 V9" stroke="#5ccb4a"/><path d="M30 20 L39 12 M31 11 H39 V19" stroke="#55b890"/><path d="M5 20 L14 27 M6 28 H14 V20" stroke="#32a83c"/><path d="M18 26 H30 M25 20 L31 26 L25 31" stroke="#3cba4e"/><path d="M5 38 H16 M11 32 L17 38 L11 43" stroke="#0c5c26"/><path d="M21 41 L29 33 M22 32 H30 V40" stroke="#2a8c68"/><path d="M37 38 V27 M31 32 L37 26 L42 32" stroke="#38a88c"/></svg></button>
                    </div>
                    <div class="group-name">Vector</div>
                </div>
            </div>

            <div class="gh-toolbar">
                <button class="tb" aria-label="Open"><svg viewBox="0 0 32 32"><path d="M8 4 H18 L22 8 V20 H8 Z" fill="#f6f6f6" stroke="#777"/><path d="M4 14 L16 13 L18 10 H27 V28 H5 Z" fill="#6cba3a" stroke="#3c7c1a"/></svg></button>
                <button class="tb" aria-label="Save"><svg viewBox="0 0 32 32"><path d="M3 3 H29 V29 H6 L3 26 Z" fill="#2f6fd6" stroke="#123c8c"/><rect x="8" y="4" width="16" height="10" fill="#dfe6f2"/><rect x="9" y="19" width="13" height="10" fill="#b9c4d8"/><rect x="11" y="21" width="4" height="7" fill="#24467e"/></svg></button>
                <span class="bar"></span>
                <span class="zoom">
                    <select aria-label="Zoom"><option>100%</option></select>
                    <svg viewBox="0 0 30 35"><path d="M8 14 L14 21 L20 14" fill="none" stroke="#222" stroke-width="2"/></svg>
                </span>
                <button class="tb" aria-label="Zoom extents"><svg viewBox="0 0 32 32"><path d="M4 12 V4 H12 M20 4 H28 V12 M28 20 V28 H20 M12 28 H4 V20" fill="none" stroke="#111" stroke-width="5"/><path d="M13 13 L19 19 M19 13 L13 19" stroke="#333" stroke-width="2"/><circle cx="16" cy="16" r="2"/></svg></button>
                <button class="tb" aria-label="Named views"><svg viewBox="0 0 32 32"><path d="M3 17 Q16 3 29 17 Q16 28 3 17 Z" fill="#e6f6fa" stroke="#444" stroke-width="2"/><circle cx="16" cy="16" r="7" fill="#3ea6d0"/><circle cx="16" cy="16" r="3"/></svg></button>
                <button class="tb" aria-label="Sketch"><svg viewBox="0 0 32 32"><path d="M28 4 L30 14 L20 26 L13 21 Z" fill="#ee4a44"/><path d="M28 4 L13 21 L17 23 Z" fill="#ff9c8c"/><path d="M13 21 L20 26 L11 29 Z" fill="#3c2a10"/><path d="M12 28 Q3 30 6 22 Q10 16 4 14" fill="none" stroke="#222" stroke-width="2"/></svg></button>
                <span class="fill"></span>
                <button class="tb" aria-label="No preview"><svg viewBox="0 0 32 32"><path d="M16 3 L23 9 V20 H9 V9 Z" fill="#ccc" stroke="#888"/><path d="M16 5 V18" stroke="#fff" stroke-width="3"/><ellipse cx="16" cy="23" rx="10" ry="7" fill="#2c2c2c"/></svg></button>
                <button class="tb" aria-label="Wire preview"><svg viewBox="0 0 32 32"><path d="M18 3 L28 12 L26 20 L14 29 L4 20 L6 12 Z" fill="#eee" stroke="#666" stroke-width="2"/><path d="M9 19 L18 6 M14 26 L26 13 M10 12 L14 9" fill="none" stroke="#888" stroke-width="2"/></svg></button>
                <button class="tb pressed" aria-label="Shaded preview"><svg viewBox="0 0 32 32"><path d="M18 3 L28 10 L27 20 L15 29 L4 22 L6 11 Z" fill="#b81418" stroke="#5a0608"/><path d="M18 4 L24 9 L12 20 L7 13 Z" fill="#d43034"/></svg></button>
                <span class="bar"></span>
                <button class="tb" aria-label="Preview selected"><svg viewBox="0 0 32 32"><path d="M4 14 L14 28 L22 28 L24 20 L10 8 Z" fill="#d8d8d8" stroke="#777"/><path d="M9 6 L20 3 L28 11 L26 21 Z" fill="#4cae22" stroke="#1c5c0c" stroke-width="2"/><path d="M6 8 L26 28" stroke="#444" stroke-width="2"/></svg></button>
                <button class="tb" aria-label="Document preview"><svg viewBox="0 0 32 32"><path d="M16 3 Q5 4 4 16 Q6 27 16 29 Z" fill="#e8842c" stroke="#a8581a"/><path d="M16 3 Q27 4 28 16 Q26 27 16 29 Z" fill="#ececec" stroke="#888"/></svg></button>
                <span class="bar"></span>
                <button class="tb" aria-label="Mesh quality"><svg viewBox="0 0 32 32"><path d="M16 4 L26 9 L27 20 L19 28 L9 25 L5 17 L8 8 Z" fill="#74b4f4" stroke="#2a5ea0" stroke-width="2"/></svg></button>
            </div>

            <div class="canvas">
                <div class="shade"></div>
                <h2 class="scribble">Construction</h2>
                <svg class="wires" width="1240" height="1150">
                    <path d="M182 547 C307 547 304 523 429 523"/>
                    <path d="M-2 709 C40 709 60 708 102 708"/>
                    <path d="M299 709 C389 709 339 557 429 557"/>
                    <path d="M632 540 C727 540 717 620 812 620"/>
                </svg>
                <div class="node cluster">
                    <div class="ports in"><span>Vertices</span><span>Closed</span></div>
                    <div class="pill">Outer Hexagon Pline</div>
                    <div class="ports out"><span>Polyline<i class="grip right"></i></span></div>
                </div>
                <div class="node extrude">
                    <div class="ports in"><span><i class="grip left"></i>Base</span><span><i class="grip left"></i>Direction</span></div>
                    <svg width="32" height="38" viewBox="0 0 32 38"><path d="M2 34 V5 Q5 0 9 4 Q12 8 16 5 Q20 8 23 4 Q27 0 30 5 V34 Q26 30 23 34 Q20 36 16 33 Q12 36 9 34 Q6 30 2 34 Z" fill="#ff9a14" stroke="#e8401e" stroke-width="2"/><path d="M2 34 Q6 30 9 34 Q12 36 16 33 Q20 36 23 34 Q26 30 30 34 M16 33 V14" fill="none" stroke="#1a0a00" stroke-width="3"/><path d="M16 8 L21 17 H11 Z" fill="#1a0a00"/></svg>
                    <div class="ports out"><span>Extrusion<i class="grip right"></i></span></div>
                </div>
                <div class="node unit">
                    <div class="ports in"><span><i class="grip left"></i>Factor</span></div>
                    <svg width="32" height="34" viewBox="0 0 32 34"><path d="M7 30 V10" stroke="#000" stroke-width="4"/><path d="M7 1 L12 12 H2 Z"/><rect x="5" y="27" width="5" height="5" fill="#fff" stroke="#000"/><text class="serif" x="14" y="20" font-size="34">y</text></svg>
                    <div class="ports out"><span>Unit vector<i class="grip right"></i></span></div>
                </div>
                <div class="node brep">
                    <div class="ports in"><span><i class="grip left"></i>Brep</span></div>
                    <svg width="26" height="32" viewBox="0 0 26 32"><use href="#brep"/></svg>
                    <div class="ports out"><span>Brep<i class="grip right"></i></span></div>
                </div>
                <div class="recent"><svg width="26" height="32" viewBox="0 0 26 32"><use href="#brep"/></svg></div>
                <svg class="compass" width="92" height="74" viewBox="0 0 92 74">
                    <path d="M0 19 L12 15 L16 25 L8 31 Z M12 22 L20 26 L18 30 Z"/>
                    <path d="M16 38 Q10 24 26 8 Q34 6 36 10 L24 30 Z"/><circle cx="33" cy="6" r="4"/>
                    <circle cx="53" cy="37" r="34" fill="#fff" stroke="#222" stroke-width="2"/>
                    <circle cx="53" cy="37" r="31" fill="url(#dial)"/>
                    <path d="M57 5 L67 8 L60 15 Z M85 41 L82 51 L74 43 Z M47 69 L38 66 L46 58 Z M21 31 L23 23 L31 29 Z" fill="#fff"/>
                </svg>
            </div>
            <div class="gh-footer"></div>
        </div>
    </div>

    <script src="ground.js"></script>
</body>
</html>
```

FILE: styles.css
```css
* {
    box-sizing: border-box;
}

body {
    margin: 0;
    height: 100vh;
    overflow: hidden;
    background-color: #000;
    font-family: Inter, "Liberation Sans", sans-serif;
    font-size: 19px;
    color: #111;
}

button, select, input {
    font: inherit;
    color: inherit;
}

button {
    border: none;
    background: none;
    padding: 0;
    cursor: pointer;
}

svg {
    display: block;
}

.defs {
    position: absolute;
    width: 0;
    height: 0;
}

.desktop {
    display: grid;
    grid-template-columns: 1256fr 1244fr;
    height: 100vh;
    padding-bottom: 3px;
    background-color: #05050c;
}

.window {
    display: flex;
    flex-direction: column;
    min-width: 0;
    min-height: 0;
}

/* Rhino window */
.rhino {
    background-color: #828282;
    border-radius: 8px 0 0 8px;
    padding-bottom: 9px;
    overflow: hidden;
}

.rhino-header {
    height: 98px;
    background: linear-gradient(#eae8eb, #cfcdd0);
    border-bottom: 1px solid #a3a1a4;
}

.titlebar {
    display: flex;
    align-items: center;
    height: 38px;
    padding-left: 11px;
}

.lights {
    display: flex;
    gap: 14px;
}

.light {
    width: 21px;
    height: 21px;
    border-radius: 50%;
    background-color: #dcdcdc;
    border: 1px solid #cacaca;
}

.light.red {
    background-color: #fc5b57;
    border-color: #df4744;
}

.light.yellow {
    background-color: #fdbd3f;
    border-color: #dfa023;
}

.light.green {
    background-color: #34c84a;
    border-color: #27a934;
}

.doc-title {
    flex: 1;
    display: flex;
    justify-content: center;
    align-items: center;
    gap: 9px;
    padding-left: 356px;
    font-size: 22px;
    color: #3b393c;
}

.toolbar {
    display: flex;
    align-items: center;
    height: 56px;
    padding-left: 21px;
}

.side-toggle {
    width: 35px;
    height: 35px;
    border: 3px solid #1a7cff;
    border-left-width: 11px;
}

.modes {
    display: flex;
    gap: 14px;
    margin-left: 94px;
}

.modes button {
    height: 26px;
    padding: 0 20px;
    border-radius: 6px;
    font-size: 22px;
    font-weight: 600;
    line-height: 26px;
    color: #48464a;
}

.modes .on {
    background-color: #858386;
    color: #fff;
}

.toolbar-right {
    display: flex;
    align-items: center;
    gap: 15px;
    margin-left: auto;
}

.layer-btn {
    display: flex;
    align-items: center;
    width: 66px;
    height: 32px;
    padding-left: 9px;
    background-color: #f8f8f8;
    border-radius: 6px 0 0 6px;
    box-shadow: 0 1px 1px #aaa;
}

.swatch {
    width: 25px;
    height: 25px;
    background-color: #000;
}

.rhino-main {
    flex: 1;
    display: grid;
    grid-template-columns: 225px 1fr 12px;
    min-height: 0;
}

.sidebar {
    display: flex;
    flex-direction: column;
    min-height: 0;
    background-color: #ececec;
    border-right: 2px solid #8d8d8d;
    overflow: hidden;
}

.strip {
    flex: none;
    height: 46px;
    background: linear-gradient(#fafafa, #ececec);
    border-bottom: 1px solid #c4c4c4;
}

.command {
    flex: none;
    width: 196px;
    height: 37px;
    margin: 18px 0 12px 12px;
    padding: 5px 6px 0;
    border: 1px solid #b3b3b3;
    background-color: #fff;
    font-size: 22px;
}

.command::placeholder {
    color: #bababa;
}

.tools {
    flex: none;
    display: grid;
    grid-template-columns: repeat(4, 52px);
    grid-auto-rows: 52px;
    height: 546px;
    overflow: hidden;
    border-bottom: 2px solid #8d8d8d;
}

.tool {
    position: relative;
    width: 52px;
    height: 52px;
}

.tool svg {
    width: 52px;
    height: 52px;
    fill: #fff;
    stroke: #000;
    stroke-width: 4;
}

.tool .thin {
    fill: none;
    stroke: #888;
    stroke-width: 3;
}

.tool.more::after {
    content: "";
    position: absolute;
    left: 35px;
    top: 39px;
    border: 5px solid transparent;
    border-top: 9px solid #333;
    border-bottom: none;
}

.osnap {
    flex: 1;
    display: flex;
    flex-direction: column;
    min-height: 0;
    padding-top: 9px;
}

.osnap label {
    display: flex;
    align-items: center;
    height: 31px;
    padding-left: 30px;
    gap: 7px;
    color: #141414;
}

.snaps {
    flex: 1;
    display: flex;
    flex-direction: column;
    justify-content: space-between;
    margin-top: 10px;
    margin-bottom: -4px;
}

.osnap .off {
    color: #b4b4b4;
}

.osnap input {
    appearance: none;
    flex: none;
    width: 25px;
    height: 25px;
    margin: 0;
    border: 1px solid #bcbcbc;
    border-radius: 50%;
    background-color: #fff;
}

.osnap input[type="radio"]:checked {
    border-color: #3f96f3;
    background: radial-gradient(circle, #fff 0 3px, #419bf9 4px);
}

.osnap input[type="checkbox"] {
    width: 21px;
    height: 21px;
    margin: 0 2px;
    border-radius: 4px;
    display: grid;
    place-items: center;
}

.osnap input[type="checkbox"]:checked {
    border-color: #3f96f3;
    background-color: #419bf9;
}

.osnap input[type="checkbox"]:checked::after {
    content: "";
    width: 6px;
    height: 12px;
    margin-bottom: 4px;
    border: solid #fff;
    border-width: 0 2px 2px 0;
    transform: rotate(40deg);
}

.osnap input:disabled {
    background-color: #f1f1f1;
    border-color: #cfcfcf;
}

.view-area {
    display: flex;
    flex-direction: column;
    min-width: 0;
    min-height: 0;
}

.view-tabs {
    flex: none;
    display: flex;
    align-items: center;
    height: 46px;
    padding: 2px 0 0 12px;
    background: linear-gradient(#fafafa, #ececec);
    border-bottom: 2px solid #74797f;
    font-size: 22px;
    color: #4a4a4a;
}

.layout-btn {
    margin-right: 20px;
}

.tab-list {
    display: flex;
}

.view-tab {
    height: 24px;
    padding: 0 34px 0 33px;
    border-left: 2px solid #8a8a8a;
    line-height: 24px;
}

.view-tab:first-child {
    border-left-color: #8a8a8a;
}

.current {
    color: #1b78d0;
}

.layouts {
    margin-left: auto;
    padding-right: 36px;
}

.viewport {
    position: relative;
    flex: 1;
    min-height: 0;
    background-color: #9ba3ab;
}

.scene {
    width: 100%;
    height: 100%;
}

.minor {
    stroke: #7d868e;
    stroke-width: 1;
    opacity: 0.35;
}

.major {
    stroke: #6b747d;
    stroke-width: 1;
    opacity: 0.75;
}

.wall {
    fill: none;
    stroke: #960a12;
    stroke-width: 2;
}

.edges {
    fill: none;
    stroke: #a8060c;
    stroke-width: 2;
}

.gizmo {
    fill: none;
    stroke: #62666a;
    stroke-width: 2;
}

.gizmo text {
    font-size: 20px;
    fill: #62666a;
    stroke: none;
}

.view-label {
    position: absolute;
    left: 2px;
    top: 2px;
    height: 35px;
    padding: 2px 6px 0;
    background-color: #2d5c8f;
    border: 1px solid #1f4670;
    color: #fff;
    font-size: 21px;
    font-weight: 600;
}

.edge {
    display: flex;
    flex-direction: column;
    border-left: 1px solid #999;
    background-color: #f0f0f0;
}

.edge-top {
    height: 46px;
    background-color: #dedede;
}

.edge-head {
    height: 39px;
    border-bottom: 1px solid #ccc;
}

.edge-body {
    height: 491px;
    background-color: #f4f4f4;
}

.edge-grip {
    height: 59px;
    background-color: #d6d6d6;
    border-bottom: 2px solid #8d8d8d;
}

.edge-grip + .edge-grip {
    height: 45px;
    border-bottom: none;
}

.edge-rest {
    flex: 1;
}

.status {
    flex: none;
    display: flex;
    align-items: center;
    height: 50px;
    padding: 3px 0 0 4px;
    background: linear-gradient(#dedede, #cfcfcf);
    border-bottom: 1px solid #666;
    white-space: nowrap;
}

.message {
    flex: 1;
    margin-left: 4px;
}

.units {
    margin-right: 29px;
}

.cplane {
    display: flex;
    align-items: center;
    width: 121px;
    height: 28px;
    margin-right: 25px;
    border: 2px solid #929292;
    border-radius: 6px;
}

.cplane select {
    appearance: none;
    flex: 1;
    min-width: 0;
    height: 24px;
    padding: 0 0 0 10px;
    border: none;
    background: none;
    line-height: 24px;
}

.cplane svg {
    margin-right: 8px;
}

.coord-x {
    width: 143px;
}

.coord-y {
    width: 30px;
}

/* Grasshopper window */
.gh {
    position: relative;
    background-color: #efefef;
    border-left: 1px solid #c2c2c2;
    border-radius: 10px;
    box-shadow: 0 12px 46px rgba(0, 0, 0, 0.5);
    font-family: "Liberation Sans", Arial, sans-serif;
}

.gh-title {
    flex: none;
    display: flex;
    align-items: center;
    height: 38px;
    padding-left: 12px;
    background-color: #f6f6f6;
    border-bottom: 1px solid #cdcdcd;
    border-radius: 10px 10px 0 0;
}

.gh-title h1 {
    flex: 1;
    margin: 0;
    padding: 1px 106px 0 0;
    text-align: center;
    font-family: Inter, sans-serif;
    font-size: 22px;
    font-weight: 400;
    color: #a9a9a9;
}

.gh-tabs {
    flex: none;
    display: flex;
    height: 39px;
    padding-left: 9px;
    gap: 22px;
    font-size: 20px;
    color: #808080;
    white-space: nowrap;
}

.gh-tabs button {
    height: 44px;
}

.gh-tabs .active {
    z-index: 1;
    height: 41px;
    margin: 1px 0 0 -13px;
    padding: 0 10px 6px;
    border: 2px solid #929292;
    border-bottom: none;
    border-radius: 12px 12px 0 0;
    background: linear-gradient(#fff 40%, #d6d6d6);
    color: #000;
}

.ribbon {
    flex: none;
    display: flex;
    align-items: flex-start;
    gap: 7px;
    height: 104px;
    padding: 4px 0 0 4px;
    border-top: 2px solid #929292;
    border-bottom: 1px solid #c4c4c4;
    border-radius: 10px 12px 0 0;
    background: linear-gradient(#cbcbcb, #efefef 90%);
}

.group {
    border: 2px solid #6e6e6e;
    border-radius: 7px;
    overflow: hidden;
    background-color: #1f1f1f;
}

.group-icons {
    display: flex;
    align-items: center;
    height: 51px;
    background: linear-gradient(#e9e9e9, #cfcfcf);
    box-shadow: inset 0 0 0 2px #f3f3f3;
}

.group-icons button,
.group-icons svg {
    width: 49px;
    height: 48px;
}

.group-icons text {
    fill: #111;
}

.sep {
    width: 2px;
    height: 34px;
    margin: 0 8px;
    background-color: #b2b2b2;
}

.group-name {
    position: relative;
    height: 23px;
    padding-right: 20px;
    background: linear-gradient(#333, #161616);
    color: #fff;
    font-size: 17px;
    line-height: 21px;
    text-align: center;
}

.group-name::after {
    content: "✦";
    position: absolute;
    right: 3px;
    top: 2px;
    font-family: "DejaVu Sans", sans-serif;
    font-size: 14px;
    color: #8e8e8e;
}

.gh-toolbar {
    flex: none;
    display: flex;
    align-items: center;
    gap: 9px;
    height: 55px;
    padding: 0 7px 3px 5px;
}

.tb {
    display: grid;
    place-items: center;
    width: 57px;
    height: 34px;
    border: 1px solid #d6d6d6;
    border-bottom-color: #bdbdbd;
    border-radius: 6px;
    background-color: #fff;
}

.tb svg {
    width: 28px;
    height: 28px;
}

.pressed {
    background-color: #e3e3e3;
}

.bar {
    width: 1px;
    height: 28px;
    margin: 0 -1px;
    background-color: #cfcfcf;
}

.fill {
    flex: 1;
}

.zoom {
    display: flex;
    width: 116px;
    height: 35px;
    margin-left: -4px;
    border: 1px solid #c2c2c2;
    border-radius: 0 6px 6px 0;
    background-color: #fff;
}

.zoom select {
    appearance: none;
    flex: 1;
    min-width: 0;
    padding: 0 0 6px 7px;
    border: none;
    background: none;
    font-size: 17px;
    color: #000;
}

.zoom svg {
    width: 30px;
    border-left: 1px solid #d6d6d6;
}

.canvas {
    position: relative;
    flex: 1;
    min-height: 0;
    margin: 0 2px 0 1px;
    overflow: hidden;
    background-color: #dddad2;
    background-image:
        linear-gradient(90deg, #b6b4ad 2px, transparent 2px),
        linear-gradient(#bfbdb6 2px, transparent 2px);
    background-size: 261px 100%, 100% 87px;
    background-position: 86px 0, 0 67px;
}

.shade {
    height: 70px;
    border-bottom: 2px solid #000;
    background: linear-gradient(rgba(190, 188, 182, 0.3), rgba(170, 168, 160, 0.45) 35%, rgba(70, 70, 68, 0.6));
}

.scribble {
    position: absolute;
    left: -15px;
    top: 164px;
    margin: 0;
    font-size: 43px;
    font-weight: 400;
    line-height: 50px;
    color: #111;
}

.wires {
    position: absolute;
    left: 0;
    top: 0;
    fill: none;
    stroke: #5f5c55;
    stroke-width: 5;
}

.node {
    position: absolute;
    display: flex;
    align-items: center;
    border: 2px solid #333;
    border-radius: 6px;
    background: linear-gradient(#fff, #eee 24%, #dcdcdc 26%, #cdcdcd);
    box-shadow: 0 0 0 2px rgba(255, 255, 255, 0.5), 0 2px 5px rgba(0, 0, 0, 0.15);
    font-size: 14px;
    color: #000;
    white-space: nowrap;
}

.node svg {
    overflow: visible;
}

.ports {
    align-self: stretch;
    display: flex;
    flex-direction: column;
    justify-content: space-around;
}

.ports span {
    line-height: 16px;
}

.in {
    text-align: right;
}

.grip {
    position: absolute;
    width: 8px;
    height: 17px;
    border: 3px solid #000;
    background-color: #fff;
}

.grip.left {
    left: -9px;
    border-right: none;
    border-radius: 8px 0 0 8px;
}

.grip.right {
    right: -9px;
    border-left: none;
    border-radius: 0 8px 8px 0;
}

.cluster {
    left: -2px;
    top: 457px;
    width: 177px;
    height: 179px;
    background: linear-gradient(#f4f4f4, #e6e6e6 7%, #dedede 9%, #c9c9c9);
}

.cluster .in {
    width: 56px;
}

.pill {
    height: 172px;
    width: 43px;
    margin: 0 4px 0 6px;
    border: 2px solid #111;
    border-radius: 6px;
    background: linear-gradient(#444, #333 88%, #4a4a4a 90%, #777);
    color: #fff;
    font-size: 16px;
    font-weight: 700;
    line-height: 39px;
    text-align: center;
    writing-mode: vertical-rl;
    transform: rotate(180deg);
}

.extrude {
    left: 434px;
    top: 501px;
    width: 191px;
    height: 78px;
}

.extrude .in {
    width: 63px;
    padding-bottom: 4px;
}

.extrude svg {
    margin: 0 10px 0 11px;
}

.unit {
    left: 109px;
    top: 683px;
    width: 184px;
    height: 51px;
    background: linear-gradient(#eeeef6, #d6d6e2 26%, #b4b3c2 28%, #9b99ad);
}

.unit .in,
.brep .in {
    padding-left: 7px;
}

.unit svg {
    margin: 0 11px 0 10px;
}

.brep {
    left: 818px;
    top: 594px;
    width: 136px;
    height: 51px;
}

.brep svg {
    margin: 0 13px;
}

.serif {
    font-family: "Liberation Serif", serif;
    fill: #333;
}

.recent {
    position: absolute;
    left: 0;
    bottom: 0;
    display: grid;
    align-items: center;
    width: 60px;
    height: 49px;
    padding-left: 11px;
    border: 2px solid #111;
    border-left: none;
    background: linear-gradient(#f2f2f2, #dcdcdc 38%, #bdbdbd 40%, #777);
}

.compass {
    position: absolute;
    right: 12px;
    bottom: 19px;
}

.gh-footer {
    flex: none;
    height: 39px;
    border-top: 1px solid #c9c9c9;
    border-radius: 0 0 10px 10px;
    background: linear-gradient(#e6e6e6, #f0f0f0);
}
```

FILE: ground.js
```js
// ground grid of the perspective view, 100 units each way, heavy line every 10
const ground = document.getElementById("ground");
const origin = [646.6, 767.3];
const vanishX = [3684, 43];
const vanishY = [-998, 38];
const a = 0.0175;
const b = 0.02278;
const extent = 100;

function project(x, y) {
    const w = 1 + a * x + b * y;
    return [0, 1].map(i => ((origin[i] + a * x * vanishX[i] + b * y * vanishY[i]) / w).toFixed(1));
}

function addLine(from, to, heavy) {
    const line = document.createElementNS("http://www.w3.org/2000/svg", "line");
    line.setAttribute("x1", from[0]);
    line.setAttribute("y1", from[1]);
    line.setAttribute("x2", to[0]);
    line.setAttribute("y2", to[1]);
    line.setAttribute("class", heavy ? "major" : "minor");
    ground.appendChild(line);
}

for (let i = -extent; i <= extent; i++) {
    const heavy = i % 10 === 0;
    // stop short of the camera plane
    const minX = Math.max(-extent, (0.1 - 1 - b * i) / a);
    const minY = Math.max(-extent, (0.1 - 1 - a * i) / b);
    if (minX < extent) addLine(project(minX, i), project(extent, i), heavy);
    if (minY < extent) addLine(project(i, minY), project(i, extent), heavy);
}
```
